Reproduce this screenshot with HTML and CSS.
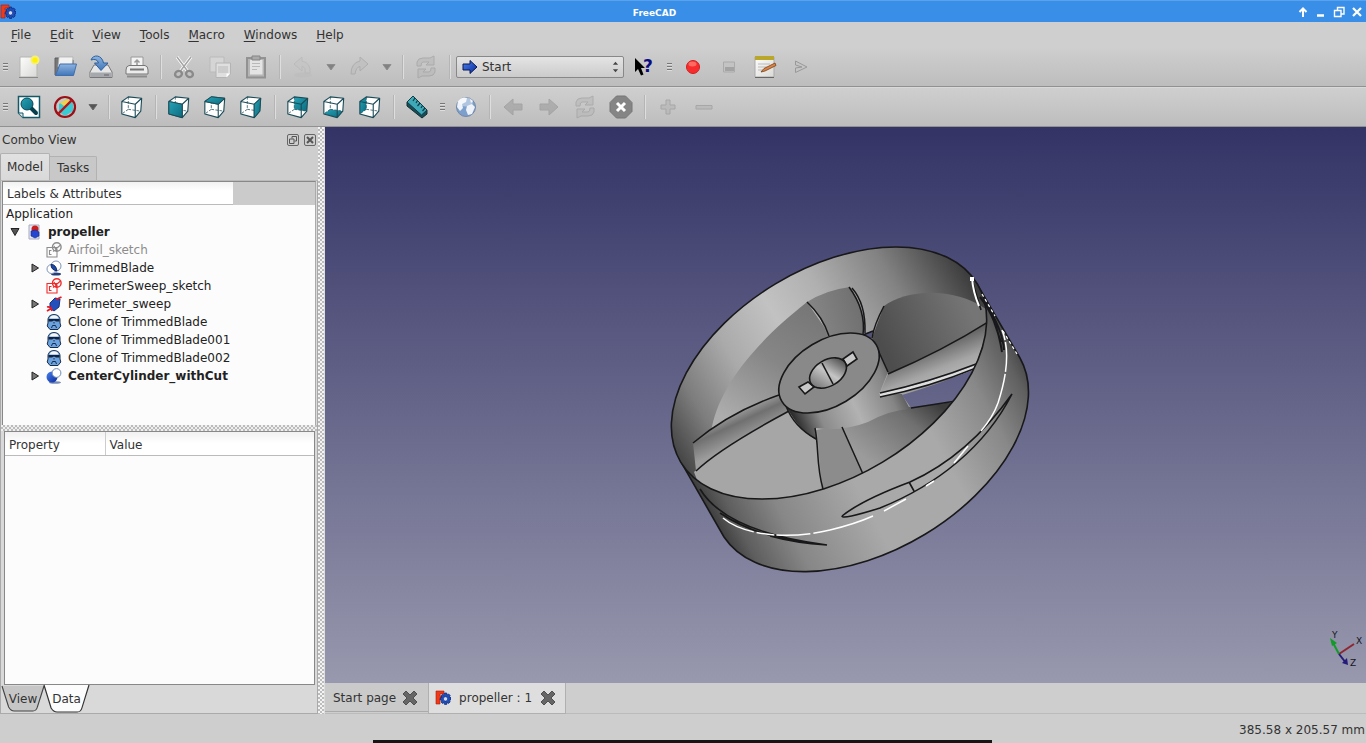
FILE: index.html
```html
<!DOCTYPE html>
<html lang="en">
<head>
<meta charset="utf-8">
<title>FreeCAD</title>
<link rel="stylesheet" href="styles.css">
</head>
<body>
<svg class="defs" aria-hidden="true">
  <defs>
    <linearGradient id="teal" x1="0" y1="0" x2="1" y2="1"><stop offset="0" stop-color="#27a3b5"/><stop offset="1" stop-color="#0b6b80"/></linearGradient>
    <linearGradient id="paper" x1="0" y1="0" x2="1" y2="1"><stop offset="0" stop-color="#fdfdfd"/><stop offset="1" stop-color="#d9d9d6"/></linearGradient>
    <linearGradient id="blue" x1="0" y1="0" x2="0" y2="1"><stop offset="0" stop-color="#8fb4e0"/><stop offset="1" stop-color="#4076b8"/></linearGradient>
    <linearGradient id="royal" x1="0" y1="0" x2="1" y2="1"><stop offset="0" stop-color="#4a82f0"/><stop offset="1" stop-color="#0a2a9a"/></linearGradient>
    <symbol id="cube" viewBox="0 0 24 26">
      <path d="M1 7 8 2 22.500 3.500 15.500 10Z M1 7V20.500L15.500 24.500V10 M15.500 24.500 21.500 17.500 22.500 3.500" fill="none" stroke="#1b4b57" stroke-width="1.200" stroke-linejoin="round"/>
      <path d="M8 2V15.500L1 20.500M8 15.500 21.500 17.500" fill="none" stroke="#1b4b57" stroke-width=".8" stroke-dasharray="3 1.500"/>
    </symbol>
    <symbol id="logo" viewBox="0 0 16 16">
      <path d="M1 1H9V4H5V6H8V9H5V14H1Z" fill="#f03a17" stroke="#a81a08" stroke-width=".6"/>
      <path d="M9.500 3h2.200l.4 1.900 1.600-.9 1.500 1.600-1 1.500 1.800.5v2.200l-1.800.5 1 1.600-1.600 1.500-1.500-.9-.4 1.900h-2.200l-.4-1.900-1.600.9L6 12l.9-1.600L5.200 10V7.800l1.800-.5-.9-1.400 1.500-1.600 1.500.9Z" fill="#1d4fc0" stroke="#0c2470" stroke-width=".7"/>
      <circle cx="10.500" cy="8.900" r="2.200" fill="#d4dcf0" stroke="#0c2470" stroke-width=".6"/>
    </symbol>
    <symbol id="sketch" viewBox="0 0 16 16">
      <path d="M1 5.500H11V15H1Z M3.500 8v5 M3.500 8.500h2M3.500 12.500h2 M8 4l3 6 M7 9.500 14.500 3" fill="none" stroke="currentColor" stroke-width="1.100"/>
      <circle cx="10.800" cy="5" r="4.300" fill="none" stroke="currentColor" stroke-width="1.400"/>
    </symbol>
    <symbol id="clone" viewBox="0 0 16 16">
      <path d="M2 6C2 2 5 .6 8 .6S14 2 14 6V9L14.800 12 12 15.500H4L1.200 12 2 9Z" fill="#6ba3e0" stroke="#182c4a"/>
      <path d="M3.500 4.500Q4.500 1.300 8 1.200T12.500 4.500Z" fill="#f4f6f8"/>
      <path d="M2.500 5H13.500V7.500L10 7.500 8 6.500 6 7.500 2.500 7.500Z" fill="#14213c"/>
      <path d="M5.500 14 6.500 11.500H9.500L10.500 14M8 8v1.500" fill="none" stroke="#182c4a"/>
    </symbol>
    <symbol id="close" viewBox="0 0 16 16">
      <path d="M4 1 8 5 12 1 15 4 11 8 15 12 12 15 8 11 4 15 1 12 5 8 1 4Z" fill="#666" stroke="#505050" stroke-linejoin="round"/>
    </symbol>
    <symbol id="refresh" viewBox="0 0 24 24">
      <path d="M3 11V7Q4 3 9 3H16L20 1V10H12L15 7H9Q7 7 7 11ZM21 13V17Q20 21 15 21H8L4 23V14H12L9 17H15Q17 17 17 13Z" fill="#b9b9b9" stroke="#999"/>
    </symbol>
    <symbol id="arrow" viewBox="0 0 24 24"><path d="M3 9H12V4L21 12 12 20V15H3Z" fill="#9c9c9c" stroke="#8e8e8e"/></symbol>
    <symbol id="caret" viewBox="0 0 10 8"><path d="M1 1.500H9L5 7Z" fill="currentColor" stroke="#686868"/></symbol>
  </defs>
</svg>

<div class="window">
  <header class="titlebar">
    <svg class="app-logo" viewBox="0 0 16 16"><use href="#logo"/></svg>
    <h1 class="title">FreeCAD</h1>
    <div class="window-buttons">
      <button class="wbtn" aria-label="Shade"><svg viewBox="0 0 12 12"><path d="M6 11V3M2.500 6 6 2.500 9.500 6" fill="none" stroke="#fff" stroke-width="2"/></svg></button>
      <button class="wbtn" aria-label="Minimize"><svg viewBox="0 0 12 12"><path d="M2 9.500H9" stroke="#fff" stroke-width="2.500"/></svg></button>
      <button class="wbtn" aria-label="Restore"><svg viewBox="0 0 12 12"><path d="M4.500 4V1.500H11V8H8.500M1.500 4.500H8V10.500H1.500Z" fill="none" stroke="#fff" stroke-width="1.400"/></svg></button>
      <button class="wbtn" aria-label="Close window"><svg viewBox="0 0 12 12"><path d="M2 2 10 10M10 2 2 10" stroke="#fff" stroke-width="2.200"/></svg></button>
    </div>
  </header>

  <nav class="menubar">
    <button class="menu"><u>F</u>ile</button>
    <button class="menu"><u>E</u>dit</button>
    <button class="menu"><u>V</u>iew</button>
    <button class="menu"><u>T</u>ools</button>
    <button class="menu"><u>M</u>acro</button>
    <button class="menu"><u>W</u>indows</button>
    <button class="menu"><u>H</u>elp</button>
  </nav>

  <div class="toolbar">
    <span class="grip"></span>
    <button class="tool" aria-label="New"><svg viewBox="0 0 24 24"><path d="M3 2H20V22H3Z" fill="url(#paper)" stroke="#b5b5b0"/><path d="M2 22.500H21" stroke="#888"/><circle cx="18" cy="5" r="4.500" fill="#f7f078"/><circle cx="18" cy="5" r="2.600" fill="#fff200"/></svg></button>
    <button class="tool" aria-label="Open"><svg viewBox="0 0 24 24"><path d="M2 20V3H9L10 5H20V20Z" fill="#777" stroke="#606060"/><path d="M6 2H20L19 12H5Z" fill="#f2f2f2" stroke="#aaa" stroke-width=".7"/><path d="M7 9H23.500L20.500 20.500H2.500Z" fill="url(#blue)" stroke="#3f6fae"/></svg></button>
    <button class="tool" aria-label="Save"><svg viewBox="0 0 24 24"><path d="M5 10H19L23 17V22.500H1V17Z" fill="#e6e6e6" stroke="#777"/><path d="M2 17.500H22V22H2Z" fill="#a5a8ad"/><path d="M15 20H20" stroke="#666"/><path d="M2 5C4-1 13-.5 14.500 8H19L12 15.500 5.500 8H9.500Q8 3 2 5Z" fill="url(#blue)" stroke="#2d619e"/></svg></button>
    <button class="tool" aria-label="Print"><svg viewBox="0 0 24 24"><path d="M6 12V2H18V12" fill="#f3f3f3" stroke="#999"/><path d="M12 5V10M9.500 7.500 12 5 14.500 7.500" fill="none" stroke="#999" stroke-width="1.500"/><path d="M4 10.500H20Q23 11 23 15V19H1V15Q1 11 4 10.500Z" fill="#ececec" stroke="#777"/><path d="M5 14.500H19" stroke="#777" stroke-width="2"/><path d="M2 20.500H22V22.500H2Z" fill="#8c8c8c"/></svg></button>
    <span class="sep"></span>
    <button class="tool" aria-label="Cut"><svg viewBox="0 0 24 24"><path d="M5 2 15.500 16M19 2 8.500 16" stroke="#fff" stroke-width="3"/><path d="M5 2 15.500 16M19 2 8.500 16" stroke="#a5a5a5" stroke-width="1.500"/><g fill="none" stroke="#8a8a8a" stroke-width="2.400"><ellipse cx="6.500" cy="19" rx="3.500" ry="3" transform="rotate(-25 6.500 19)"/><ellipse cx="17.500" cy="19" rx="3.500" ry="3" transform="rotate(25 17.500 19)"/></g></svg></button>
    <button class="tool" aria-label="Copy"><svg viewBox="0 0 24 24"><path d="M2 2H16V17H2Z" fill="#d5d5d5" stroke="#bbb"/><path d="M8 8H22.500V19L19 22.500H8Z" fill="#dfdfdf" stroke="#b4b4b4"/><path d="M10 11H20V18H10Z" fill="#ccc"/><path d="M22 18.500H18.500V22.500Z" fill="#fff"/></svg></button>
    <button class="tool" aria-label="Paste"><svg viewBox="0 0 24 24"><path d="M3 3H21V22.500H3Z" fill="#b5b5b5" stroke="#929292" stroke-width="2"/><path d="M6 5H18.500V19.500H6Z" fill="#e4e4e4"/><path d="M8 8.500H16M8 11.500H16M8 14.500H13" stroke="#b9b9b9"/><path d="M8 1H16V5H8Z" fill="#aaa" stroke="#858585"/></svg></button>
    <span class="sep"></span>
    <button class="tool faint" aria-label="Undo"><svg viewBox="0 0 24 24"><ellipse cx="12" cy="20" rx="9" ry="2.500" fill="#bcbcbc"/><path d="M3 9 11 2V6Q20 8 19 18H14Q15 12 11 11.500V16Z" fill="#c4c4c4" stroke="#b4b4b4"/></svg></button>
    <button class="drop" aria-label="Undo list"><svg class="caret light" viewBox="0 0 10 8"><use href="#caret"/></svg></button>
    <button class="tool faint" aria-label="Redo"><svg viewBox="0 0 24 24"><path d="M21 9 13 2V6Q4 8 4 19H8Q9 12 13 11.500V16Z" fill="#bebebe" stroke="#9e9e9e"/></svg></button>
    <button class="drop" aria-label="Redo list"><svg class="caret light" viewBox="0 0 10 8"><use href="#caret"/></svg></button>
    <span class="sep"></span>
    <button class="tool faint" aria-label="Refresh"><svg viewBox="0 0 24 24"><use href="#refresh"/></svg></button>
    <span class="sep"></span>
    <label class="combo">
      <svg class="combo-icon" viewBox="0 0 16 16"><path d="M1 5H8V1.500L15 8 8 14.500V11H1Z" fill="url(#royal)" stroke="#0a1950"/></svg>
      <select class="combo-select" aria-label="Workbench"><option>Start</option></select>
      <svg class="combo-arrows" viewBox="0 0 8 14"><path d="M1 4.500 4 1 7 4.500ZM1 9.500 4 13 7 9.500Z" fill="#444"/></svg>
    </label>
    <button class="tool" aria-label="What's this?"><svg class="spill" viewBox="0 0 24 24"><path d="M4 3V17L7 14 10 20.500 12.500 19.500 10 13H14Z" fill="#000"/><text class="help-mark" x="12" y="17">?</text></svg></button>
    <span class="grip inner"></span>
    <button class="tool" aria-label="Record macro"><svg viewBox="0 0 24 24"><circle cx="12" cy="12" r="6.500" fill="#f72d2d" stroke="#d31e1e"/><ellipse cx="11.500" cy="9" rx="4" ry="2.500" fill="#ff6b60"/></svg></button>
    <button class="tool" aria-label="Stop macro"><svg viewBox="0 0 24 24"><path d="M6.500 7H17.500V17H6.500Z" fill="#c3c3c3" stroke="#aaa"/><path d="M8 12H17V16H8Z" fill="#a3a3a3"/></svg></button>
    <button class="tool" aria-label="Macros"><svg viewBox="0 0 24 24"><path d="M2 2H21V22H2Z" fill="url(#paper)" stroke="#aaa"/><path d="M2 1H21V5H2Z" fill="#b9a72c"/><path d="M2 22.500H21" stroke="#666"/><path d="M5 9H17M5 12H14M5 15H10" stroke="#bbb"/><path d="M8 17 11 13.500 22 8 23 10.500 12 16Z" fill="#dc8445" stroke="#754017" stroke-width=".8"/></svg></button>
    <button class="tool" aria-label="Run macro"><svg viewBox="0 0 24 24"><path d="M6.500 6 18 12 6.500 17.500V13L13 12 6.500 10Z" fill="#c5c5c5" stroke="#999"/></svg></button>
  </div>

  <div class="toolbar views">
    <span class="grip"></span>
    <button class="tool" aria-label="Fit all"><svg viewBox="0 0 24 24"><path d="M1.500 1.500H22.500V22.500H6L1.500 18Z" fill="#fff" stroke="#155967" stroke-width="1.500"/><path d="M1.500 18H6V22.500" fill="#dfe9ea" stroke="#155967"/><path d="M14 13 19 18" stroke="#073f4c" stroke-width="4" stroke-linecap="round"/><circle cx="10" cy="9" r="6" fill="url(#teal)" stroke="#084654"/></svg></button>
    <button class="tool" aria-label="Draw style"><svg viewBox="0 0 24 24"><path d="M6 9 14 4 20 8V16L12 21 6 17Z" fill="#39cbd3"/><path d="M7 8 14 4 18 7 11 11Z" fill="#efd34f"/><circle cx="12" cy="12" r="10" fill="none" stroke="#9b0f16" stroke-width="2.200"/><path d="M5 19 19 5" stroke="#b71218" stroke-width="2.400"/></svg></button>
    <button class="drop" aria-label="Draw style list"><svg class="caret" viewBox="0 0 10 8"><use href="#caret"/></svg></button>
    <span class="sep"></span>
    <button class="tool" aria-label="Isometric"><svg viewBox="0 0 24 26"><path d="M1 7 8 2 22.500 3.500 21.500 17.500 15.500 24.500 1 20.500Z" fill="#fff"/><use href="#cube"/></svg></button>
    <span class="sep"></span>
    <button class="tool" aria-label="Front"><svg viewBox="0 0 24 26"><path d="M1 7 8 2 22.500 3.500 21.500 17.500 15.500 24.500 1 20.500Z" fill="#fff"/><use href="#cube"/><path d="M1 7 15.500 10V24.500L1 20.500Z" fill="url(#teal)" stroke="#1b4b57"/></svg></button>
    <button class="tool" aria-label="Top"><svg viewBox="0 0 24 26"><path d="M1 7 8 2 22.500 3.500 21.500 17.500 15.500 24.500 1 20.500Z" fill="#fff"/><use href="#cube"/><path d="M1 7 8 2 22.500 3.500 15.500 10Z" fill="url(#teal)" stroke="#1b4b57"/></svg></button>
    <button class="tool" aria-label="Right"><svg viewBox="0 0 24 26"><path d="M1 7 8 2 22.500 3.500 21.500 17.500 15.500 24.500 1 20.500Z" fill="#fff"/><use href="#cube"/><path d="M15.500 10 22.500 3.500 21.500 17.500 15.500 24.500Z" fill="url(#teal)" stroke="#1b4b57"/></svg></button>
    <span class="sep"></span>
    <button class="tool" aria-label="Rear"><svg viewBox="0 0 24 26"><path d="M1 7 8 2 22.500 3.500 21.500 17.500 15.500 24.500 1 20.500Z" fill="#fff"/><path d="M8 2 22.500 3.500 21.500 17.500 8 15.500Z" fill="url(#teal)"/><use href="#cube"/></svg></button>
    <button class="tool" aria-label="Bottom"><svg viewBox="0 0 24 26"><path d="M1 7 8 2 22.500 3.500 21.500 17.500 15.500 24.500 1 20.500Z" fill="#fff"/><path d="M1 20.500 8 15.500 21.500 17.500 15.500 24.500Z" fill="url(#teal)"/><use href="#cube"/></svg></button>
    <button class="tool" aria-label="Left"><svg viewBox="0 0 24 26"><path d="M1 7 8 2 22.500 3.500 21.500 17.500 15.500 24.500 1 20.500Z" fill="#fff"/><path d="M1 7 8 2V15.500L1 20.500Z" fill="url(#teal)"/><use href="#cube"/></svg></button>
    <span class="sep"></span>
    <button class="tool" aria-label="Measure"><svg viewBox="0 0 24 24"><path d="M2 7 8 1 22 15V19L17 23 2 11Z" fill="#174d58" stroke="#102d34"/><path d="M2 7 8 1 22 15 16.500 20Z" fill="#3ea9b8" stroke="#123c46"/><path d="M10 3 8 6M12.500 5.500 11 8M15 8 12.500 11M17.500 10.500 16 13M20 13 17.500 16" stroke="#123c46" stroke-width="1.200"/></svg></button>
    <span class="grip inner"></span>
    <button class="tool" aria-label="Web"><svg viewBox="0 0 24 24"><circle cx="12" cy="12" r="9.500" fill="#7c9fcc" stroke="#7387a6"/><path d="M4 6Q8 1 13 3L12 7 8 9 9 13 6 16 3 12ZM13 11 18 9 21 12 18 19 14 20 12 15ZM16 4 19 6 17 8Z" fill="#eef3f9"/><ellipse cx="12" cy="7" rx="7" ry="4.500" fill="#fff" opacity=".4"/></svg></button>
    <span class="sep"></span>
    <button class="tool faint" aria-label="Back"><svg class="flip" viewBox="0 0 24 24"><use href="#arrow"/></svg></button>
    <button class="tool faint" aria-label="Forward"><svg viewBox="0 0 24 24"><use href="#arrow"/></svg></button>
    <button class="tool faint" aria-label="Reload"><svg viewBox="0 0 24 24"><use href="#refresh"/></svg></button>
    <button class="tool" aria-label="Stop"><svg viewBox="0 0 24 24"><path d="M7.500 1H16.500L23 7.500V16.500L16.500 23H7.500L1 16.500V7.500Z" fill="#858585" stroke="#777"/><path d="M8 8 16 16M16 8 8 16" stroke="#fff" stroke-width="3"/></svg></button>
    <span class="sep"></span>
    <button class="tool faint" aria-label="Zoom in"><svg viewBox="0 0 24 24"><path d="M10 5H14V10H19V14H14V19H10V14H5V10H10Z" fill="#b5b5b5" stroke="#939393"/></svg></button>
    <button class="tool faint" aria-label="Zoom out"><svg viewBox="0 0 24 24"><path d="M4 10.500H20V14H4Z" fill="#b5b5b5" stroke="#939393"/></svg></button>
  </div>

  <main class="workspace">
    <aside class="dock">
      <div class="dock-title">
        <h2 class="dock-name">Combo View</h2>
        <button class="dock-btn" aria-label="Float"><svg viewBox="0 0 10 10"><path d="M4 3.500V1.500H8.500V6H6.500M1.500 4H6V8.500H1.500Z" fill="none" stroke="#555"/></svg></button>
        <button class="dock-btn" aria-label="Close panel"><svg viewBox="0 0 10 10"><path d="M2 2 8 8M8 2 2 8" stroke="#555" stroke-width="2"/></svg></button>
      </div>
      <div class="tabs"><button class="tab active">Model</button><button class="tab">Tasks</button></div>
      <div class="pane">
        <section class="tree">
          <div class="tree-head"><span class="head-cell">Labels &amp; Attributes</span></div>
          <ul class="tree-list">
            <li class="node root">Application</li>
            <li class="node doc"><svg class="twist" viewBox="0 0 10 10"><path d="M1 1.500H9L5 8.500Z" fill="#555" stroke="#222"/></svg><svg class="ico" viewBox="0 0 16 16"><path d="M3 1H13V15H3Z" fill="#e6e6fa" stroke="#aab"/><circle cx="9" cy="5" r="3.500" fill="#c81e1e"/><path d="M5 7 10 6 13 8V12L9 14 5 12Z" fill="#2546d0" stroke="#142a80" stroke-width=".6"/></svg><b>propeller</b></li>
            <li class="node hidden"><span class="twist"></span><svg class="ico" viewBox="0 0 16 16"><use href="#sketch"/></svg>Airfoil_sketch</li>
            <li class="node"><svg class="twist" viewBox="0 0 10 10"><path d="M2 1 8.500 5 2 9Z" fill="#777" stroke="#222"/></svg><svg class="ico" viewBox="0 0 16 16"><ellipse cx="10" cy="14" rx="5" ry="1.500" fill="#23407d"/><circle cx="10" cy="6" r="5" fill="#fff" stroke="#7d93b8"/><circle cx="5.500" cy="9" r="4.500" fill="#fff" stroke="#7d93b8"/><path d="M5 4.500Q10 4.500 11 11 5 10 5 4.500Z" fill="#1c49a5" stroke="#0f286b"/></svg>TrimmedBlade</li>
            <li class="node"><span class="twist"></span><svg class="ico red" viewBox="0 0 16 16"><use href="#sketch"/></svg>PerimeterSweep_sketch</li>
            <li class="node"><svg class="twist" viewBox="0 0 10 10"><path d="M2 1 8.500 5 2 9Z" fill="#777" stroke="#222"/></svg><svg class="ico" viewBox="0 0 16 16"><path d="M4 7 9 2 14 3 13 11 8 15 4 12Z" fill="#2450be" stroke="#17337d"/><path d="M1 11Q5 10 6 15M1 15 6 12M10 3.500 15.500 1" fill="none" stroke="#e71824" stroke-width="1.800"/></svg>Perimeter_sweep</li>
            <li class="node"><span class="twist"></span><svg class="ico" viewBox="0 0 16 16"><use href="#clone"/></svg>Clone of TrimmedBlade</li>
            <li class="node"><span class="twist"></span><svg class="ico" viewBox="0 0 16 16"><use href="#clone"/></svg>Clone of TrimmedBlade001</li>
            <li class="node"><span class="twist"></span><svg class="ico" viewBox="0 0 16 16"><use href="#clone"/></svg>Clone of TrimmedBlade002</li>
            <li class="node"><svg class="twist" viewBox="0 0 10 10"><path d="M2 1 8.500 5 2 9Z" fill="#777" stroke="#222"/></svg><svg class="ico" viewBox="0 0 16 16"><ellipse cx="9" cy="14.500" rx="6" ry="1.300" fill="#758ab5"/><circle cx="6" cy="9" r="5.500" fill="url(#royal)"/><circle cx="10.500" cy="5" r="4.400" fill="#fff" stroke="#7088b5"/></svg><b>CenterCylinder_withCut</b></li>
          </ul>
        </section>
        <div class="hsplit"></div>
        <section class="props">
          <table class="prop-table"><thead><tr><th class="prop-col">Property</th><th>Value</th></tr></thead></table>
        </section>
        <div class="bottom-tabs">
          <button class="btab"><svg class="btab-shape" viewBox="0 0 38 28" preserveAspectRatio="none"><path d="M0 1 6 22Q8 26 11 26H28Q31 26 32 22L38 1" fill="#c6c6c6" stroke="#444"/></svg><span>View</span></button>
          <button class="btab current"><svg class="btab-shape" viewBox="0 0 38 28" preserveAspectRatio="none"><path d="M0 0 6 23Q8 27 11 27H28Q31 27 32 23L38 0" fill="#fcfcfc" stroke="#333"/></svg><span>Data</span></button>
        </div>
      </div>
    </aside>
    <div class="vsplit"></div>

    <section class="mdi">
      <div class="viewport">
        <svg class="scene" viewBox="325 127 1041 556" preserveAspectRatio="xMidYMid meet" role="img" aria-label="Propeller model">
          <defs>
            <linearGradient id="outer" gradientUnits="userSpaceOnUse" x1="700" y1="500" x2="1020" y2="330"><stop offset="0" stop-color="#3a3a3a"/><stop offset=".06" stop-color="#5e5e5e"/><stop offset=".18" stop-color="#878787"/><stop offset=".4" stop-color="#a9a9a9"/><stop offset=".65" stop-color="#a9a9a9"/><stop offset=".82" stop-color="#888"/><stop offset=".93" stop-color="#606060"/><stop offset="1" stop-color="#373737"/></linearGradient>
            <linearGradient id="inner" gradientUnits="userSpaceOnUse" x1="685" y1="465" x2="978" y2="290"><stop offset="0" stop-color="#484848"/><stop offset=".12" stop-color="#7d7d7d"/><stop offset=".28" stop-color="#aaa"/><stop offset=".45" stop-color="#c2c2c2"/><stop offset=".6" stop-color="#b0b0b0"/><stop offset=".8" stop-color="#828282"/><stop offset="1" stop-color="#3c3c3c"/></linearGradient>
            <linearGradient id="backblade" gradientUnits="userSpaceOnUse" x1="820" y1="300" x2="735" y2="425"><stop offset="0" stop-color="#747474"/><stop offset=".5" stop-color="#868686"/><stop offset="1" stop-color="#adadad"/></linearGradient>
            <linearGradient id="topblade" gradientUnits="userSpaceOnUse" x1="815" y1="320" x2="864" y2="305"><stop offset="0" stop-color="#858585"/><stop offset="1" stop-color="#6e6e6e"/></linearGradient>
            <linearGradient id="rightblade" gradientUnits="userSpaceOnUse" x1="885" y1="350" x2="970" y2="310"><stop offset="0" stop-color="#4d4d4d"/><stop offset="1" stop-color="#757575"/></linearGradient>
            <linearGradient id="rightface" gradientUnits="userSpaceOnUse" x1="920" y1="350" x2="935" y2="388"><stop offset="0" stop-color="#5f5f5f"/><stop offset=".6" stop-color="#a5a5a5"/><stop offset="1" stop-color="#bababa"/></linearGradient>
            <linearGradient id="leftface" gradientUnits="userSpaceOnUse" x1="732" y1="412" x2="745" y2="440"><stop offset="0" stop-color="#a2a2a2"/><stop offset=".4" stop-color="#707070"/><stop offset="1" stop-color="#9c9c9c"/></linearGradient>
            <linearGradient id="lowblade" gradientUnits="userSpaceOnUse" x1="935" y1="402" x2="880" y2="470"><stop offset="0" stop-color="#3c3c3c"/><stop offset=".35" stop-color="#707070"/><stop offset="1" stop-color="#9b9b9b"/></linearGradient>
            <linearGradient id="hubside" gradientUnits="userSpaceOnUse" x1="795" y1="420" x2="905" y2="370"><stop offset="0" stop-color="#2d2d2d"/><stop offset=".2" stop-color="#8b8b8b"/><stop offset=".5" stop-color="#b2b2b2"/><stop offset=".8" stop-color="#858585"/><stop offset="1" stop-color="#3c3c3c"/></linearGradient>
            <linearGradient id="bore" gradientUnits="userSpaceOnUse" x1="811" y1="382" x2="846" y2="364"><stop offset="0" stop-color="#777"/><stop offset=".5" stop-color="#c5c5c5"/><stop offset="1" stop-color="#484848"/></linearGradient>
            <clipPath id="opening"><ellipse cx="829" cy="373" rx="173" ry="104" transform="rotate(-31 829 373)"/></clipPath>
            <linearGradient id="sky" gradientUnits="userSpaceOnUse" x1="0" y1="127" x2="0" y2="683"><stop offset="0" stop-color="#333366"/><stop offset="1" stop-color="#9898ae"/></linearGradient>
          </defs>
          <path d="M681 462A173 104 -31 0 1 977 284L1020 358A173 104 -31 0 1 724 537Z" fill="url(#outer)" stroke="#18181a" stroke-width="1.600"/>
          <g clip-path="url(#opening)">
            <path d="M660 230H1000V510H660Z" fill="url(#inner)"/>
            <path d="M711 432C717 394 745 351 807 302L840 350 790 415 700 475Z" fill="url(#backblade)"/>
            <path d="M807 302Q826 290 850 287 866 310 863 336L829 342Q823 317 807 302Z" fill="url(#topblade)"/>
            <path d="M884 306C907 289 956 286 990 312L986 325Q950 346 888 374L872 338Z" fill="url(#rightblade)"/>
            <path d="M888 374Q945 350 990 321L976 365Q930 383 880 393Z" fill="url(#rightface)"/>
            <path d="M693 443Q730 412 779 395L789 411Q720 448 696 471Z" fill="url(#leftface)"/>
            <path d="M694 472Q720 448 789 411L817 433 823 515H710Z" fill="#a6a6a6"/>
            <path d="M815 430 842 426 880 410 955 402 990 390 950 470 823 510Z" fill="url(#lowblade)"/>
            <path d="M817 430 842 426 863 474 863 500H823Z" fill="#8c8c8c"/>
            <path d="M786 406 878 351 888 372 880 392 902 394 910 409Q890 410 868 422 842 432 815 428L817 440Q800 432 786 406Z" fill="url(#hubside)"/>
            <path d="M902 395Q940 384 980 367L957 401 911 408Z" fill="url(#sky)"/>
            <path d="M863 334 873 331 871 339Z" fill="#535377"/>
            <path d="M880 395Q930 385 976 367" fill="none" stroke="#dedede" stroke-width="4"/>
            <g fill="none" stroke="#18181a" stroke-width="1.500">
              <path d="M807 302Q823 317 829 336M849 287Q866 310 863 335M852 288Q866 304 865 333"/>
              <path d="M884 306Q874 325 872 338M888 374Q944 350 988 322M880 393Q930 382 976 364M880 397Q930 387 976 368M863 335 873 331M878 350 888 372"/>
              <path d="M693 443Q730 412 779 395M696 471Q720 448 789 411M786 406Q794 427 816 439M815 428C819 447 816 465 823 489M842 427 863 474M911 408 956 401"/>
            </g>
          </g>
          <ellipse cx="829" cy="373" rx="173" ry="104" transform="rotate(-31 829 373)" fill="none" stroke="#18181a" stroke-width="1.600"/>
          <ellipse cx="829" cy="373" rx="55" ry="33" transform="rotate(-31 829 373)" fill="#898989" stroke="#18181a" stroke-width="1.600"/>
          <path d="M799 387 808 382 814 387 805 394ZM843 359 853 352 857 359 847 366Z" fill="#c8c8c8" stroke="#18181a" stroke-width="1.600"/>
          <ellipse cx="828" cy="373" rx="20" ry="13" transform="rotate(-31 828 373)" fill="url(#bore)" stroke="#18181a" stroke-width="1.600"/>
          <g fill="none" stroke="#18181a" stroke-width="1.600">
            <path d="M822 363 833 384"/>
            <path d="M842 516Q862 500 910 482C952 463 985 432 1012 394C985 447 937 485 880 508Q842 520 842 516M909 482 914 491"/>
            <path d="M700 489Q726 532 827 545Q760 540 720 513M770 536Q795 543 827 545"/>
            <path d="M980 297Q997 318 1002 352M984 300Q1003 330 1004 350M990 310 1001 342" stroke-width="2"/>
            <path d="M972 280 981 310"/>
          </g>
          <g fill="none" stroke="#fff" stroke-width="1.500">
            <path d="M723 518C742 534 784 541 830 530" stroke-dasharray="34 3 18 2"/>
            <path d="M830 530Q855 524 873 516M884 511 906 499M926 486 934 481M954 463 968 446M981 431Q993 417 998 403"/>
            <path d="M998 403C1007 375 1010 350 1002 330" stroke-dasharray="30 2"/>
            <path d="M972 278Q973 292 979 306" stroke-width="2"/>
            <path d="M982 294 995 316M1003 331 1017 354" stroke-width="1.200" stroke-dasharray="3 3"/>
          </g>
          <path d="M970 277H974V281H970Z" fill="#fff"/>
        </svg>
        <svg class="axes" viewBox="0 0 36 38" role="img" aria-label="Axis cross">
          <path d="M11 24 26 14" stroke="#8e2530" stroke-width="2"/><path d="M11 24 4 11" stroke="#139b28" stroke-width="2"/><path d="M2 8 9 13 4 16Z" fill="#139b28"/>
          <path d="M11 24 18 33" stroke="#251b78" stroke-width="2"/><path d="M20 35 19 28 14 33Z" fill="#251b78"/>
          <text class="axis" x="4" y="8">Y</text><text class="axis" x="28" y="14">X</text><text class="axis" x="22" y="36">Z</text>
        </svg>
      </div>
      <div class="doc-tabs">
        <div class="doc-tab"><button class="doc-name">Start page</button><button class="doc-close" aria-label="Close Start page"><svg viewBox="0 0 16 16"><use href="#close"/></svg></button></div>
        <div class="doc-tab open"><svg class="doc-logo" viewBox="0 0 16 16"><use href="#logo"/></svg><button class="doc-name">propeller : 1</button><button class="doc-close" aria-label="Close propeller"><svg viewBox="0 0 16 16"><use href="#close"/></svg></button></div>
      </div>
    </section>
  </main>

  <footer class="statusbar">385.58 x 205.57 mm</footer>
  <div class="panel-edge"></div>
</div>
</body>
</html>
```
FILE: styles.css
```css
* { box-sizing: border-box; }

body {
  margin: 0;
  font: 12px/18px "DejaVu Sans", sans-serif;
  color: #333;
  background: #cecece;
}

button, select { font: inherit; color: inherit; border: 0; padding: 0; background: none; }
svg { display: block; flex: none; }
.defs { position: absolute; width: 0; height: 0; }

.window { position: relative; display: flex; flex-direction: column; height: 100vh; overflow: hidden; }

.titlebar { display: flex; align-items: center; height: 22px; flex: none; background: #398ee7; border-top: 1px solid #59a2ee; padding-right: 3px; }
.app-logo { width: 16px; height: 16px; }
.title { flex: 1; margin: 0; padding-right: 4px; padding-top: 2px; font-size: 9px; font-weight: bold; text-align: center; color: #fff; }
.window-buttons { display: flex; gap: 6px; }
.wbtn svg { width: 12px; height: 12px; }

.menubar { display: flex; gap: 19px; align-items: center; height: 25px; flex: none; padding-left: 11px; background: #cfcfcf; }
.menu u { text-underline-offset: 2px; }

.toolbar { display: flex; align-items: center; height: 40px; flex: none; border-bottom: 1px solid #919191; background: linear-gradient(#cfcfcf, #bdbdbd); }
.views { border-top: 1px solid #d9d9d9; }
.grip { flex: none; width: 5px; height: 8px; margin: 0 3px; background: repeating-linear-gradient(#777 0 1px, #dedede 1px 2px, transparent 2px 3px); }
.inner { margin: 0 3px 0 6px; }
.views .inner { margin: 0 3px 0 5px; }
.tool { display: flex; align-items: center; justify-content: center; width: 36px; height: 36px; flex: none; }
.tool svg { width: 24px; height: 24px; }
.tool .spill { overflow: visible; }
.faint { opacity: .6; }
.flip { transform: scaleX(-1); }
.sep { flex: none; width: 2px; height: 24px; margin: 0 4px 0 5px; background: #dedede; border-left: 1px solid #b5b5b5; }
.drop { display: flex; justify-content: center; width: 20px; flex: none; }
.caret { width: 10px; height: 8px; color: #555; }
.light { opacity: .6; }
.combo { display: flex; align-items: center; gap: 4px; width: 168px; height: 22px; flex: none; margin: 0 1px; padding: 0 4px 0 5px; border: 1px solid #888; border-radius: 2px; background: linear-gradient(#e4e4e4, #cbcbcb); }
.combo-icon { width: 16px; height: 16px; }
.combo-select { flex: 1; min-width: 0; appearance: none; }
.combo-arrows { width: 7px; height: 14px; }
.help-mark { font: bold 17px "DejaVu Sans", sans-serif; fill: #0b0b80; }

.workspace { display: flex; flex: 1; min-height: 0; }

.dock { display: flex; flex-direction: column; width: 318px; flex: none; }
.dock-title { display: flex; align-items: center; gap: 5px; height: 26px; padding: 0 2px; flex: none; }
.dock-name { flex: 1; margin: 0; font-size: 12px; font-weight: normal; }
.dock-btn { width: 12px; height: 12px; border: 1px solid #666; border-radius: 2px; }
.dock-btn svg { width: 10px; height: 10px; }
.tabs { display: flex; align-items: flex-end; height: 27px; flex: none; }
.tab { height: 24px; padding: 0 7px 2px; border: 1px solid #b2b2b2; border-bottom: 0; border-left: 0; background: #c8c8c8; border-radius: 0 2px 0 0; }
.active { height: 27px; padding: 0 6px 1px; border-left: 1px solid #aaa; border-radius: 2px 2px 0 0; background: linear-gradient(#e1e1e1, #d9d9d9); }
.pane { display: flex; flex-direction: column; flex: 1; min-height: 0; background: #d9d9d9; border: 1px solid #aaa; border-top-color: #bbb; }
.tree { display: flex; flex-direction: column; height: 244px; flex: none; margin: 0 1px; border: 1px solid #888; border-right-color: #aaa; border-bottom: 0; background: #fcfcfc; }
.tree-head { flex: none; height: 23px; background: #cbcbcb; }
.head-cell { display: block; width: 230px; height: 23px; padding: 0 4px; line-height: 24px; border-bottom: 1px solid #bbb; background: linear-gradient(#f2f2f2, #fff 40%); }
.tree-list { margin: 0; padding: 0; list-style: none; color: #222; }
.node { display: flex; align-items: center; height: 18px; padding-left: 27px; }
.root { padding-left: 3px; }
.doc { padding-left: 7px; }
.hidden { color: #8c8c8c; }
.twist { width: 10px; height: 10px; flex: none; margin-right: 6px; }
.ico { width: 16px; height: 16px; margin-right: 6px; }
.red { color: #ef2b2b; }
.hsplit { height: 6px; flex: none; background: repeating-conic-gradient(#bcbcbc 0 25%, #efefef 0 50%) 0 0 / 4px 4px; }
.props { flex: 1; min-height: 0; margin: 0 2px 0 3px; border: 1px solid #888; background: #fcfcfc; }
.prop-table { width: 100%; border-collapse: collapse; background: linear-gradient(#f1f1f1, #fff 50%); }
.prop-table th { height: 23px; padding: 3px 4px 0; text-align: left; font-weight: normal; border-bottom: 1px solid #bbb; }
.prop-table .prop-col { width: 100px; border-right: 1px solid #ccc; }
.bottom-tabs { display: flex; height: 28px; flex: none; padding-left: 1px; }
.btab { position: relative; height: 28px; width: 42px; }
.btab span { position: relative; }
.current { width: 45px; }
.btab-shape { position: absolute; top: 0; left: 0; width: 100%; height: 100%; overflow: visible; }

.vsplit { width: 7px; flex: none; background: repeating-conic-gradient(#bcbcbc 0 25%, #f4f4f4 0 50%) 0 0 / 4px 4px; border-right: 1px solid #ddd; }

.mdi { display: flex; flex-direction: column; flex: 1; min-width: 0; }
.viewport { position: relative; flex: 1; min-height: 0; background: linear-gradient(#333366, #9898ae); }
.scene { width: 100%; height: 100%; }
.axes { position: absolute; right: 2px; bottom: 15px; width: 36px; height: 38px; }
.axis { font: 9px "DejaVu Sans", sans-serif; fill: #16161c; }
.doc-tabs { display: flex; align-items: flex-start; height: 31px; flex: none; border-bottom: 1px solid #bbb; }
.doc-tab { display: flex; align-items: center; height: 29px; padding: 1px 10px 0 8px; gap: 6px; background: #cacaca; border-bottom: 1px solid #aaa; }
.open { height: 31px; padding: 0 9px 0 6px; gap: 8px; background: #dedede; border: 1px solid #b0b0b0; border-top: 0; }
.doc-logo, .doc-close svg { width: 16px; height: 16px; }

.statusbar { height: 29px; flex: none; padding: 0 1px; line-height: 32px; text-align: right; }
.panel-edge { position: absolute; left: 27.3%; right: 27.4%; bottom: 0; height: 3px; background: #161616; }
```
